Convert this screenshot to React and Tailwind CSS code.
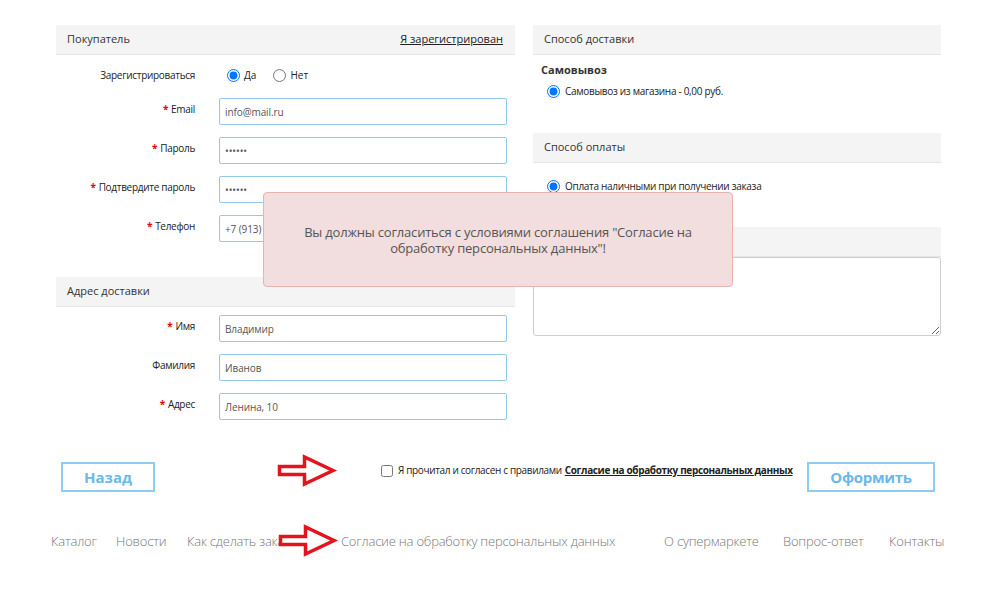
const font = { fontFamily: '"Open Sans", "Noto Sans", sans-serif' };

function Req() {
  return <span className="text-[#e30613] font-bold mr-[3px]">*</span>;
}

function Field({ label, required, value, type = 'text' }) {
  return (
    <div className="flex items-start h-[27px] mt-[12px] first:mt-0">
      <label className="w-[139px] text-right pt-[4px] leading-[15px] text-[10px] tracking-[-0.3px] text-[#222]">
        {required && <Req />}
        {label}
      </label>
      <input
        type={type}
        defaultValue={value}
        className="ml-[24px] w-[288px] h-[27px] px-[5px] border border-[#8fcbe8] rounded-[2px] text-[10px] tracking-[-0.1px] text-[#555] bg-white outline-none"
      />
    </div>
  );
}

function SectionHead({ title, right }) {
  return (
    <div className="h-[30px] bg-[#f4f4f4] border-b border-[#e6e6e6] flex items-center justify-between pl-[11px] pr-[12px] text-[11px] text-[#333]">
      <span>{title}</span>
      {right}
    </div>
  );
}

function Radio({ checked, name }) {
  return (
    <input
      type="radio"
      name={name}
      defaultChecked={checked}
      className="w-[13px] h-[13px] m-0 accent-[#0075ff]"
    />
  );
}

function Arrow({ className }) {
  return (
    <svg className={className} width="62" height="34" viewBox="0 0 62 34">
      <polygon
        points="3.5,13.5 28.5,13.5 28.5,4 57,17.5 28.5,31 28.5,21.5 3.5,21.5"
        fill="#fff"
        stroke="#e3141c"
        strokeWidth="3.5"
      />
    </svg>
  );
}

const footerLinks = [
  ['Каталог', 'w-[65px]'],
  ['Новости', 'w-[71px]'],
  ['Как сделать заказ', 'w-[154px]'],
  ['Согласие на обработку персональных данных', 'w-[323px]'],
  ['О супермаркете', 'w-[119px]'],
  ['Вопрос-ответ', 'w-[106px]'],
  ['Контакты', ''],
];

export default function App() {
  return (
    <div className="relative w-[1000px] h-[594px] bg-white overflow-hidden" style={font}>
      <div className="pt-[25px] pl-[56px]">
        <div className="grid grid-cols-[459px_408px] gap-x-[18px] items-start">
          {/* buyer + address */}
          <div>
            <SectionHead
              title="Покупатель"
              right={<a className="underline text-[#222] cursor-pointer">Я зарегистрирован</a>}
            />
            <div className="flex items-center h-[16px] mt-[12px]">
              <span className="w-[139px] text-right text-[10px] tracking-[-0.3px] text-[#222]">Зарегистрироваться</span>
              <div className="ml-[32px] flex items-center text-[10px] text-[#222]">
                <Radio name="reg" checked />
                <span className="ml-[4px]">Да</span>
                <span className="ml-[17px] flex items-center">
                  <Radio name="reg" />
                  <span className="ml-[4px]">Нет</span>
                </span>
              </div>
            </div>
            <div className="mt-[15px]">
              <Field label="Email" required value="info@mail.ru" />
              <Field label="Пароль" required value="123456" type="password" />
              <Field label="Подтвердите пароль" required value="123456" type="password" />
              <Field label="Телефон" required value="+7 (913) 123-45-67" />
            </div>

            <div className="mt-[35px]">
              <SectionHead title="Адрес доставки" />
            </div>
            <div className="mt-[8px]">
              <Field label="Имя" required value="Владимир" />
              <Field label="Фамилия" value="Иванов" />
              <Field label="Адрес" required value="Ленина, 10" />
            </div>
          </div>

          {/* delivery, payment, comment */}
          <div>
            <SectionHead title="Способ доставки" />
            <div className="mt-[7px] pl-[8px] text-[11px] leading-[16px] font-bold text-[#333]">Самовывоз</div>
            <div className="mt-[5px] pl-[14px] flex items-center h-[16px] text-[10px] tracking-[-0.3px] text-[#222]">
              <Radio name="delivery" checked />
              <span className="ml-[5px]">Самовывоз из магазина - 0,00 руб.</span>
            </div>

            <div className="mt-[34px]">
              <SectionHead title="Способ оплаты" />
            </div>
            <div className="mt-[15px] pl-[14px] flex items-center h-[16px] text-[10px] tracking-[-0.3px] text-[#222]">
              <Radio name="pay" checked />
              <span className="ml-[5px]">Оплата наличными при получении заказа</span>
            </div>

            <div className="mt-[33px]">
              <SectionHead title="" />
            </div>
            <textarea className="block w-full h-[79px] border border-[#cfcfcf] rounded-[3px] outline-none" />
          </div>
        </div>
      </div>

      {/* actions */}
      <div className="mt-[42px] ml-[61px] w-[874px] flex items-start">
        <button className="w-[94px] h-[30px] border-2 border-[#8dcdf0] text-[#6bb8ea] font-bold text-[15px] bg-white">
          Назад
        </button>
        <label className="ml-[226px] mt-[1px] flex items-center text-[10px] text-[#222] tracking-[-0.35px]">
          <input type="checkbox" className="w-[12px] h-[12px] m-0" />
          <span className="ml-[5px]">Я прочитал и согласен с правилами</span>
          <a className="ml-[3px] font-bold underline cursor-pointer">Согласие на обработку персональных данных</a>
        </label>
        <button className="ml-auto w-[128px] h-[30px] border-2 border-[#8dcdf0] text-[#6bb8ea] font-bold text-[15px] tracking-[-0.3px] bg-white">
          Оформить
        </button>
      </div>

      {/* footer menu */}
      <nav className="mt-[40px] ml-[51px] flex text-[13px] leading-[18px] font-light tracking-[-0.2px] text-[#777]">
        {footerLinks.map(([t, w]) => (
          <a key={t} className={`${w} whitespace-nowrap cursor-pointer`}>{t}</a>
        ))}
      </nav>

      <Arrow className="absolute left-[276px] top-[453px]" />
      <Arrow className="absolute left-[277px] top-[523px]" />

      {/* validation message */}
      <div className="absolute left-[263px] top-[192px] w-[470px] h-[95px] bg-[#f2dede] border border-[#e6b3b3] rounded-[4px] flex items-center justify-center text-center text-[13px] leading-[16px] tracking-[-0.2px] text-[#555] px-[30px]">
        Вы должны согласиться с условиями соглашения "Согласие на обработку персональных данных"!
      </div>
    </div>
  );
}
